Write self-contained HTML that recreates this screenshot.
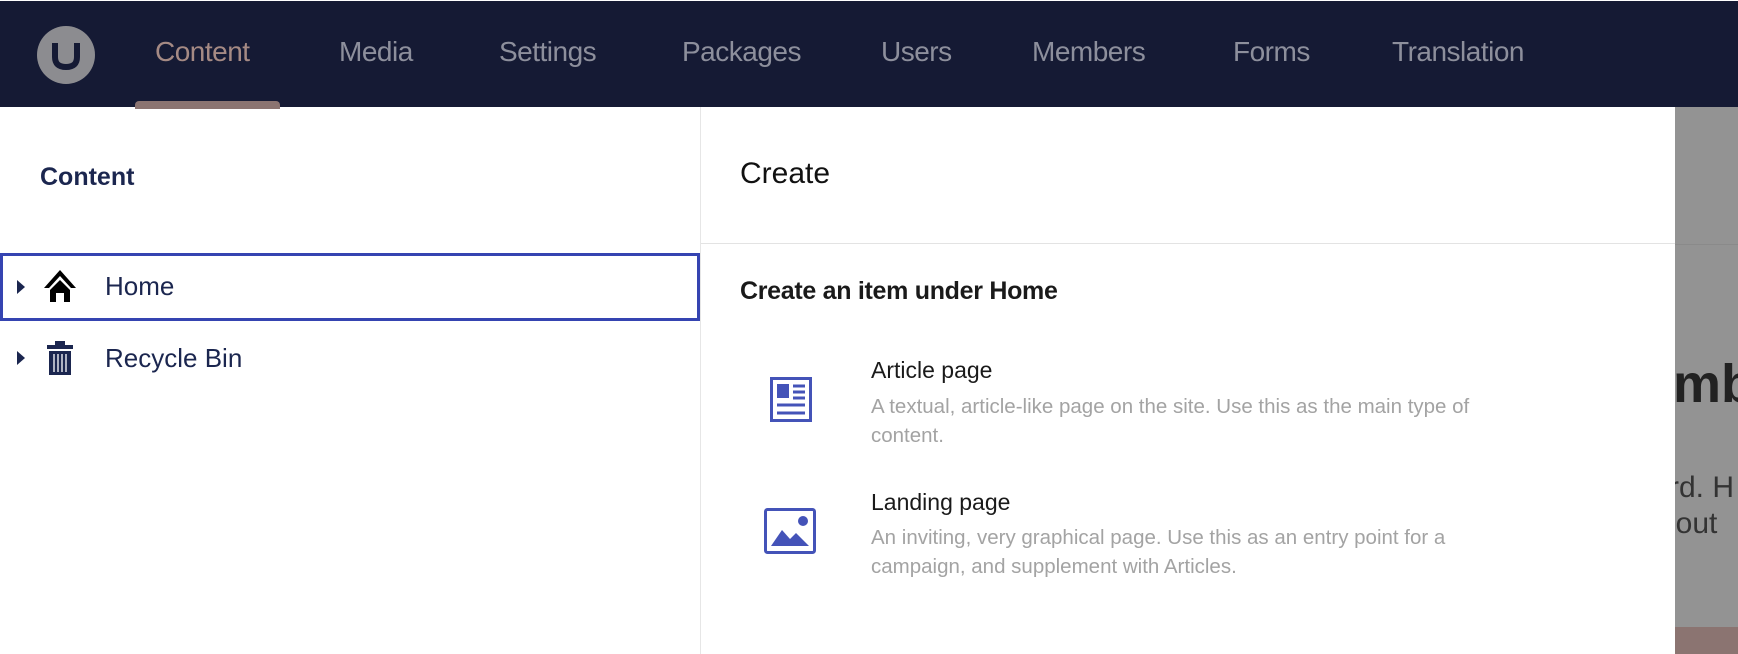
<!DOCTYPE html>
<html><head><meta charset="utf-8"><style>
*{margin:0;padding:0;box-sizing:border-box}
body{width:1738px;height:654px;overflow:hidden;background:#fff;font-family:"Liberation Sans",sans-serif;position:relative}
.hdr{position:absolute;left:0;top:1px;width:1738px;height:106px;background:#151a34}
.logo{position:absolute;left:37px;top:25px;width:58px;height:58px;border-radius:50%;background:#8c8c90}
.nav{position:absolute;top:35px;font-size:28px;color:#8d8f9c;letter-spacing:-0.5px}
.ul{position:absolute;left:135px;top:100px;width:145px;height:8px;background:#8b7471;border-radius:4px 4px 0 0}
.ov{position:absolute;left:1675px;top:107px;width:63px;height:547px;background:#939393;overflow:hidden}
.ab{position:absolute;white-space:nowrap}
</style></head><body>
<div class="hdr">
<div class="logo"><svg width="58" height="58" viewBox="0 0 58 58"><path d="M18 17 V31 Q18 41 29 41 Q40 41 40 31 V17" fill="none" stroke="#151a34" stroke-width="6"/></svg></div>
<div class="nav" style="left:155px;color:#a58a84">Content</div>
<div class="nav" style="left:339px">Media</div>
<div class="nav" style="left:499px">Settings</div>
<div class="nav" style="left:682px">Packages</div>
<div class="nav" style="left:881px">Users</div>
<div class="nav" style="left:1032px">Members</div>
<div class="nav" style="left:1233px">Forms</div>
<div class="nav" style="left:1392px">Translation</div>
<div class="ul"></div>
</div>
<div class="ab" style="left:40px;top:163px;font-size:25px;font-weight:bold;color:#1b264f">Content</div>
<div style="position:absolute;left:0;top:253px;width:700px;height:68px;border:3px solid #3544b1"></div>
<svg class="ab" style="left:16px;top:279px" width="10" height="16"><path d="M1 1 L9 8 L1 15Z" fill="#1b264f"/></svg>
<svg class="ab" style="left:42px;top:268px" width="36" height="36" viewBox="0 0 36 36"><path d="M18 2 L2 20 L7 20 L18 8 L29 20 L34 20Z M8 22 L18 12 L28 22 V34 H22 V25 H14 V34 H8Z" fill="#000"/></svg>
<div class="ab" style="left:105px;top:271px;font-size:26px;color:#1b264f">Home</div>
<svg class="ab" style="left:16px;top:350px" width="10" height="16"><path d="M1 1 L9 8 L1 15Z" fill="#1b264f"/></svg>
<svg class="ab" style="left:45px;top:340px" width="30" height="36" viewBox="0 0 30 36"><path d="M10 1 H20 V5 H28 V9 H2 V5 H10Z" fill="#1b264f"/><path d="M4 11 H26 V35 H4Z" fill="#1b264f"/><path d="M9 14 V32 M13 14 V32 M17 14 V32 M21 14 V32" stroke="#fff" stroke-width="1.3"/></svg>
<div class="ab" style="left:105px;top:343px;font-size:26px;color:#1b264f">Recycle Bin</div>
<div style="position:absolute;left:700px;top:107px;width:1px;height:547px;background:#e6e6e6"></div>
<div class="ab" style="left:740px;top:157px;font-size:30px;color:#111">Create</div>
<div style="position:absolute;left:701px;top:243px;width:1040px;height:1px;background:#e3e3e3"></div>
<div class="ab" style="left:740px;top:277px;font-size:25px;font-weight:bold;color:#1a1a1a;letter-spacing:-0.3px">Create an item under Home</div>
<svg class="ab" style="left:770px;top:377px" width="42" height="45" viewBox="0 0 42 45"><rect x="1.5" y="1.5" width="39" height="42" fill="none" stroke="#4453b8" stroke-width="3"/><rect x="7" y="7" width="12" height="14" fill="#4453b8"/><path d="M23 9 H35 M23 15 H35 M23 21 H35 M7 28 H35 M7 36 H35" stroke="#4453b8" stroke-width="3"/></svg>
<div class="ab" style="left:871px;top:357px;font-size:23px;color:#1a1a1a">Article page</div>
<div class="ab" style="left:871px;top:392px;font-size:20.5px;color:#a3a3a3;line-height:29px;white-space:normal;width:672px">A textual, article-like page on the site. Use this as the main type of content.</div>
<svg class="ab" style="left:764px;top:508px" width="52" height="46" viewBox="0 0 52 46"><rect x="1.5" y="1.5" width="49" height="43" rx="2" fill="none" stroke="#4453b8" stroke-width="3"/><circle cx="39" cy="13" r="5" fill="#4453b8"/><path d="M7 38 L18 22 L26 31 L32 25 L45 38Z" fill="#4453b8"/></svg>
<div class="ab" style="left:871px;top:489px;font-size:23px;color:#1a1a1a">Landing page</div>
<div class="ab" style="left:871px;top:523px;font-size:20.5px;color:#a3a3a3;line-height:29px;white-space:normal;width:672px">An inviting, very graphical page. Use this as an entry point for a campaign, and supplement with Articles.</div>
<div class="ov">
<div style="position:absolute;left:0;top:137px;width:63px;height:1px;background:#8a8a8a"></div>
<div class="ab" style="left:-2px;top:246px;font-size:54px;font-weight:bold;color:#222">mb</div>
<div class="ab" style="left:-6px;top:364px;font-size:30px;color:#333">rd. H</div>
<div class="ab" style="left:-16px;top:400px;font-size:30px;color:#333">bout</div>
<div style="position:absolute;left:0;top:520px;width:63px;height:30px;background:#8b7471"></div>
</div>
</body></html>
